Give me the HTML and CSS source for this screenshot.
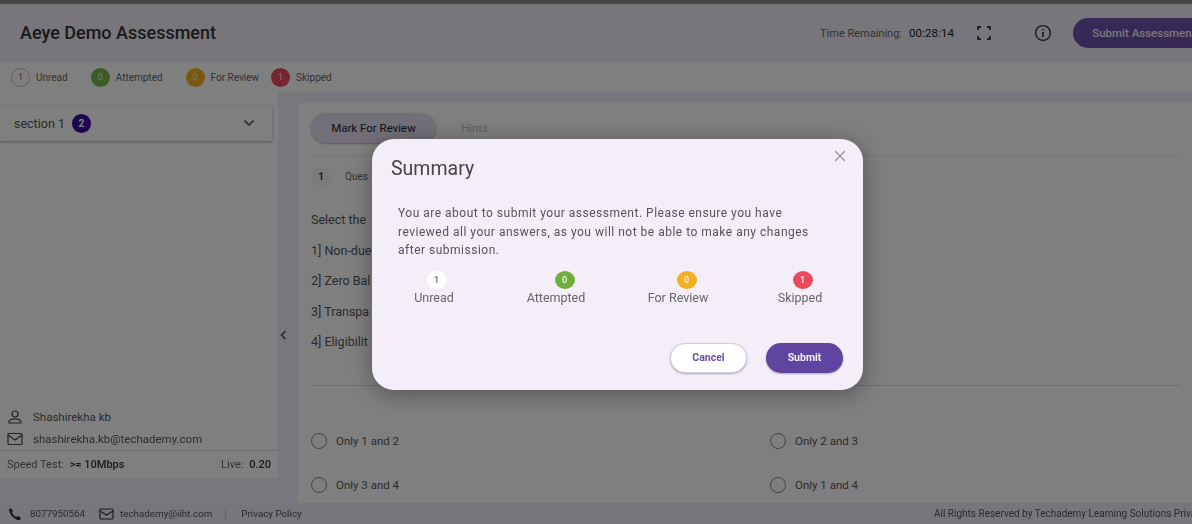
FILE: index.html
```html
<!DOCTYPE html>
<html lang="en">
<head>
    <meta charset="UTF-8">
    <title>Aeye Demo Assessment</title>
    <link rel="stylesheet" href="styles.css">
</head>
<body>
    <div class="page">
        <div class="top-strip"></div>
        <header class="header">
            <h1 class="title">Aeye Demo Assessment</h1>
            <div class="header-right">
                <span class="time-label">Time Remaining:</span>
                <span class="time-value">00:28:14</span>
                <svg class="icon-full" width="14" height="14" viewBox="0 0 14 14" fill="none" stroke="#444" stroke-width="1.8">
                    <path d="M1 4V1h3M10 1h3v3M13 10v3h-3M4 13H1v-3"/>
                </svg>
                <svg class="icon-info" width="18" height="18" viewBox="0 0 18 18" fill="none" stroke="#333" stroke-width="1.4">
                    <circle cx="9" cy="9" r="7.4"/>
                    <path d="M9 8v5" stroke-width="1.6"/>
                    <path d="M9 5v1.6" stroke-width="1.6"/>
                </svg>
                <button class="btn-assess">Submit Assessment</button>
            </div>
        </header>

        <div class="legend">
            <div class="legend-item item-unread"><span class="dot dot-outline">1</span>Unread</div>
            <div class="legend-item item-attempted"><span class="dot dot-green">0</span>Attempted</div>
            <div class="legend-item item-review"><span class="dot dot-yellow">0</span>For Review</div>
            <div class="legend-item"><span class="dot dot-red">1</span>Skipped</div>
        </div>

        <div class="main">
            <aside class="sidebar">
                <div class="section-card">
                    <span class="section-name">section 1</span>
                    <span class="section-count">2</span>
                    <svg class="chevron" width="12" height="8" viewBox="0 0 12 8" fill="none" stroke="#444" stroke-width="1.5">
                        <path d="M1.5 1.5 6 6l4.5-4.5"/>
                    </svg>
                </div>
                <div class="user-block">
                    <div class="user-row">
                        <svg width="16" height="16" viewBox="0 0 16 16" fill="none" stroke="#444" stroke-width="1.2">
                            <circle cx="8" cy="5" r="3"/>
                            <path d="M2 14v-1c0-2 3-3.2 6-3.2s6 1.2 6 3.2v1z"/>
                        </svg>
                        <span>Shashirekha kb</span>
                    </div>
                    <div class="user-row">
                        <svg width="16" height="14" viewBox="0 0 16 14" fill="none" stroke="#444" stroke-width="1.2">
                            <rect x="1" y="1.5" width="14" height="11" rx="1"/>
                            <path d="M1 3l7 5 7-5"/>
                        </svg>
                        <span>shashirekha.kb@techademy.com</span>
                    </div>
                </div>
                <div class="speed-row">
                    <span>Speed Test: <b>&gt;= 10Mbps</b></span>
                    <span>Live: <b>0.20</b></span>
                </div>
            </aside>

            <div class="gutter">
                <svg width="7" height="10" viewBox="0 0 7 10" fill="none" stroke="#444" stroke-width="1.4">
                    <path d="M5.500 1 1.500 5l4 4"/>
                </svg>
            </div>

            <section class="content">
                <div class="tabs">
                    <span class="tab-active">Mark For Review</span>
                    <span class="tab">Hints</span>
                </div>
                <div class="question-bar">
                    <span class="question-num">1</span>
                    <span class="question-label">Ques</span>
                </div>
                <div class="question-text">
                    <p>Select the</p>
                    <p>1] Non-due</p>
                    <p>2] Zero Bal</p>
                    <p>3] Transpa</p>
                    <p>4] Eligibilit</p>
                </div>
                <div class="options">
                    <label class="option"><span class="radio"></span>Only 1 and 2</label>
                    <label class="option"><span class="radio"></span>Only 2 and 3</label>
                    <label class="option"><span class="radio"></span>Only 3 and 4</label>
                    <label class="option"><span class="radio"></span>Only 1 and 4</label>
                </div>
            </section>
        </div>

        <footer class="footer">
            <svg width="14" height="14" viewBox="0 0 14 14" fill="#333">
                <path d="M2.500 1 5 3.600 4 5.400c.8 1.900 2.400 3.500 4.400 4.500l1.900-1.100 2.700 2.600-1.200 1.600c-.3.3-.7.4-1.100.3C5.700 12 1.800 8 1 3c0-.4.1-.8.4-1z"/>
            </svg>
            <span class="phone">8077950564</span>
            <svg class="footer-mail" width="15" height="12" viewBox="0 0 15 12" fill="none" stroke="#333" stroke-width="1.2">
                <rect x="1" y="1" width="13" height="10" rx="1"/>
                <path d="M1 3l6.500 4L14 3"/>
            </svg>
            <span>techademy@iiht.com</span>
            <span class="footer-sep"></span>
            <span>Privacy Policy</span>
            <span class="rights">All Rights Reserved by Techademy Learning Solutions Private Limited</span>
        </footer>
    </div>

    <div class="overlay">
        <div class="modal">
            <svg class="modal-close" width="12" height="12" viewBox="0 0 12 12" fill="none" stroke="#999" stroke-width="1.4">
                <path d="M1 1l10 10M11 1 1 11"/>
            </svg>
            <h2 class="modal-title">Summary</h2>
            <p class="modal-text">You are about to submit your assessment. Please ensure you have reviewed all your answers, as you will not be able to make any changes after submission.</p>
            <div class="stats">
                <div class="stat"><span class="stat-dot stat-white">1</span>Unread</div>
                <div class="stat stat-wide"><span class="stat-dot stat-green">0</span>Attempted</div>
                <div class="stat stat-wide"><span class="stat-dot stat-yellow">0</span>For Review</div>
                <div class="stat"><span class="stat-dot stat-red">1</span>Skipped</div>
            </div>
            <div class="modal-actions">
                <button class="btn-cancel">Cancel</button>
                <button class="btn-submit">Submit</button>
            </div>
        </div>
    </div>
</body>
</html>
```

FILE: styles.css
```css
* {
    margin: 0;
    padding: 0;
    box-sizing: border-box;
}

html, body {
    height: 100%;
    overflow: hidden;
    font-family: Roboto, "Liberation Sans", sans-serif;
    background-color: #f0edf7;
}

.page {
    display: flex;
    flex-direction: column;
    height: 524px;
    width: 1192px;
    overflow: hidden;
    filter: blur(0.7px);
}

.top-strip {
    height: 4px;
    background-color: #8c8c8c;
    flex-shrink: 0;
}

.header {
    height: 58px;
    flex-shrink: 0;
    display: flex;
    align-items: center;
    justify-content: space-between;
    padding-left: 20px;
    background-color: #f0edf7;
    border-radius: 6px 0 0 0;
}

.title {
    margin-bottom: 2px;
    font-size: 18px;
    font-weight: 500;
    color: #333;
}

.header-right {
    display: flex;
    align-items: center;
    font-size: 11px;
    color: #666;
    white-space: nowrap;
    width: 372px;
    flex-shrink: 0;
}

.time-value {
    margin-left: 7px;
    font-size: 11.500px;
    letter-spacing: 0.1px;
    color: #222;
}

.icon-full {
    margin-left: 23px;
    flex-shrink: 0;
}

.icon-info {
    margin-left: 43px;
    flex-shrink: 0;
}

.btn-assess {
    margin-left: 21px;
    width: 140px;
    height: 30px;
    padding-left: 19px;
    border: none;
    border-radius: 15px 0 0 15px;
    flex-shrink: 0;
    background-color: #6d52ad;
    color: #f3eef8;
    font-family: inherit;
    font-size: 11.500px;
    font-weight: 500;
    text-align: left;
    white-space: nowrap;
    overflow: hidden;
}

.legend {
    height: 30px;
    flex-shrink: 0;
    display: flex;
    align-items: center;
    padding-left: 11px;
    background-color: #fff;
    font-size: 10px;
    color: #666;
}

.legend-item {
    display: flex;
    align-items: center;
    gap: 6px;
}

.item-unread {
    margin-right: 23px;
}

.item-attempted {
    margin-right: 23px;
}

.item-review {
    margin-right: 12px;
}

.dot {
    width: 19px;
    height: 19px;
    border-radius: 50%;
    display: flex;
    align-items: center;
    justify-content: center;
    font-size: 9px;
    color: #eee;
}

.dot-outline {
    background-color: #fff;
    border: 1px solid #bbb;
    color: #777;
}

.dot-green {
    background-color: #7ab648;
}

.dot-yellow {
    background-color: #f2b01e;
}

.dot-red {
    background-color: #ea4a5a;
}

.main {
    flex: 1;
    min-height: 0;
    display: flex;
    background-color: #f3effc;
}

.sidebar {
    width: 278px;
    height: 386px;
    flex-shrink: 0;
    display: flex;
    flex-direction: column;
    background-color: #fff;
}

.section-card {
    width: 272px;
    height: 36px;
    margin-top: 13px;
    padding: 0 17px 0 14px;
    display: flex;
    align-items: center;
    box-shadow: 0 1px 3px rgba(0, 0, 0, 0.3);
}

.section-name {
    font-size: 12.500px;
    color: #555;
}

.section-count {
    width: 19px;
    height: 19px;
    margin-left: 7px;
    border-radius: 50%;
    display: flex;
    align-items: center;
    justify-content: center;
    background-color: #3a0ca3;
    color: #fff;
    font-size: 10px;
    font-weight: 700;
}

.chevron {
    margin-left: auto;
}

.user-block {
    margin-top: auto;
    padding-left: 7px;
}

.user-row {
    height: 22px;
    display: flex;
    align-items: center;
    gap: 10px;
    font-size: 11.500px;
    color: #555;
}

.speed-row {
    height: 28px;
    padding: 0 7px;
    display: flex;
    align-items: center;
    justify-content: space-between;
    border-top: 1px solid #ddd;
    font-size: 11px;
    color: #666;
}

.speed-row b {
    margin-left: 3px;
    font-weight: 500;
    color: #333;
}

.gutter {
    width: 20px;
    flex-shrink: 0;
    padding: 233px 0 0 2px;
}

.content {
    flex: 1;
    min-width: 0;
    margin-top: 10px;
    padding: 11px 13px 0;
    background-color: #fff;
    border-radius: 8px 0 0 0;
}

.tabs {
    display: flex;
    align-items: center;
    height: 30px;
}

.tab-active {
    width: 125px;
    height: 30px;
    border-radius: 15px;
    display: flex;
    align-items: center;
    justify-content: center;
    background-color: #e6dff2;
    box-shadow: 0 1px 2px rgba(0, 0, 0, 0.3);
    font-size: 11.500px;
    color: #222;
}

.tab {
    margin-left: 25px;
    font-size: 11.500px;
    color: #bbb;
}

.question-bar {
    margin-top: 12px;
    height: 42px;
    display: flex;
    align-items: center;
    border-top: 1px solid #eee;
    font-size: 10px;
    color: #666;
}

.question-num {
    width: 20px;
    height: 20px;
    margin-right: 14px;
    border-radius: 50%;
    display: flex;
    align-items: center;
    justify-content: center;
    background-color: #f7f7f7;
    font-weight: 700;
    color: #333;
}

.question-text {
    height: 189px;
    padding-top: 15px;
    border-bottom: 1px solid #ddd;
    font-size: 12.500px;
    color: #555;
}

.question-text p {
    height: 30.500px;
    line-height: 16px;
}

.options {
    display: grid;
    grid-template-columns: 459px 1fr;
    row-gap: 28px;
    padding-top: 47px;
}

.option {
    display: flex;
    align-items: center;
    height: 16px;
    gap: 9px;
    font-size: 11.500px;
    color: #555;
}

.radio {
    width: 16px;
    height: 16px;
    border: 1.500px solid #888;
    border-radius: 50%;
    flex-shrink: 0;
}

.footer {
    height: 21px;
    flex-shrink: 0;
    display: flex;
    align-items: center;
    padding-left: 8px;
    background-color: #f0edf7;
    font-size: 9.800px;
    color: #555;
    white-space: nowrap;
    overflow: hidden;
}

.phone {
    margin-left: 8px;
}

.footer-mail {
    margin: 0 6px 0 14px;
}

.footer-sep {
    width: 1px;
    height: 14px;
    margin: 0 15px 0 13px;
    background-color: #ccc;
}

.rights {
    margin-left: auto;
    width: 258px;
    flex-shrink: 0;
    font-size: 10px;
}

.overlay {
    position: fixed;
    top: 0;
    left: 0;
    right: 0;
    bottom: 0;
    padding: 139px 0 0 372px;
    background-color: rgba(0, 0, 0, 0.5);
}

.modal {
    position: relative;
    width: 491px;
    height: 251px;
    padding: 19px 20px 0 19px;
    border-radius: 22px;
    background-color: #f3eef8;
    box-shadow: 0 4px 24px rgba(0, 0, 0, 0.35);
    filter: blur(0.5px);
}

.modal-close {
    position: absolute;
    top: 11px;
    right: 17px;
}

.modal-title {
    font-size: 19.500px;
    font-weight: 400;
    line-height: 22px;
    color: #444;
}

.modal-text {
    margin: 24px 30px 0 7px;
    font-size: 12px;
    letter-spacing: 0.5px;
    line-height: 18.500px;
    color: #555;
}

.stats {
    display: grid;
    grid-template-columns: repeat(4, 122px);
    margin: 11px 0 0 -18px;
}

.stat {
    display: flex;
    flex-direction: column;
    align-items: center;
    font-size: 12.500px;
    color: #666;
}

.stat-dot {
    width: 20px;
    height: 18px;
    margin-left: 5px;
    margin-bottom: 1px;
    border-radius: 50%;
    display: flex;
    align-items: center;
    justify-content: center;
    font-size: 9px;
    font-weight: 500;
    color: #f5f5f5;
}

.stat-wide .stat-dot {
    margin-left: 17px;
}

.stat-white {
    background-color: #fff;
    color: #666;
}

.stat-green {
    background-color: #6fb03c;
}

.stat-yellow {
    background-color: #f2b01e;
}

.stat-red {
    background-color: #ea4a5a;
}

.modal-actions {
    display: flex;
    justify-content: flex-end;
    gap: 19px;
    margin-top: 38px;
}

.btn-cancel, .btn-submit {
    width: 77px;
    height: 30px;
    border-radius: 15px;
    font-family: inherit;
    font-size: 10.500px;
    font-weight: 700;
}

.btn-cancel {
    background-color: #fff;
    border: 1.500px solid #d5cce6;
    box-shadow: 0 1px 2px rgba(0, 0, 0, 0.3);
    color: #6a50a8;
}

.btn-submit {
    background-color: #5f459f;
    border: none;
    box-shadow: 0 1px 2px rgba(0, 0, 0, 0.3);
    color: #f3eef8;
}
```
